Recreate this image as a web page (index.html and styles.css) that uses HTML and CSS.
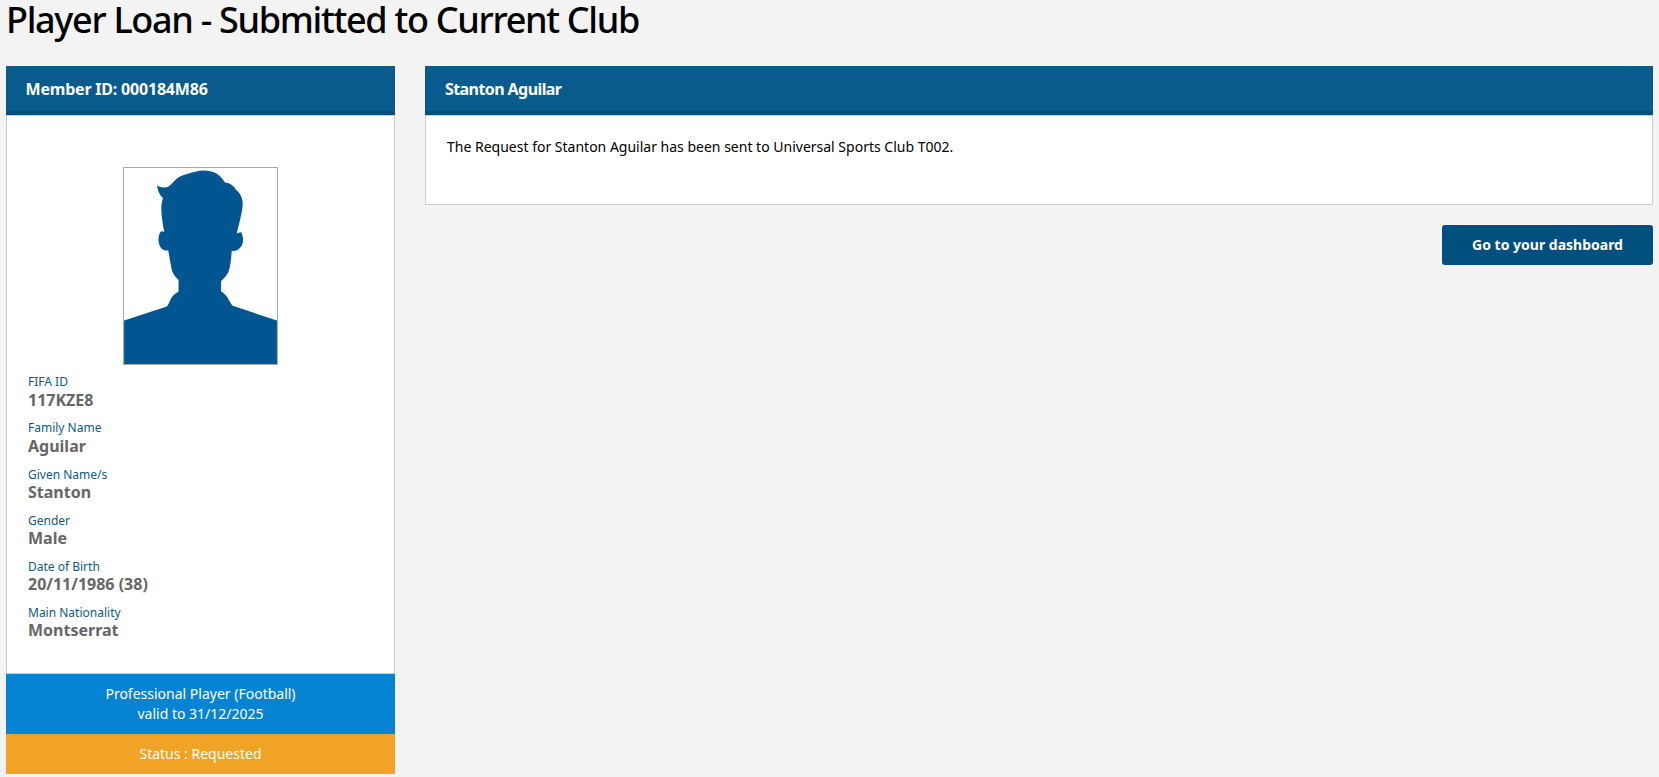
FILE: index.html
```html
<!DOCTYPE html>
<html lang="en">

<head>
    <meta charset="UTF-8">
    <meta name="viewport" content="width=device-width, initial-scale=1.0">
    <title>Player Loan - Submitted to Current Club</title>
    <link rel="stylesheet" href="styles.css">
</head>

<body>
    <h1>Player Loan - Submitted to Current Club</h1>

    <div class="columns">
        <!-- Member card -->
        <aside class="member-card">
            <div class="panel-title member-id">Member ID: 000184M86</div>
            <div class="member-body">
                <div class="photo">
                    <svg viewBox="41 38 460 590" aria-hidden="true">
                        <path d="M41 497 L170 455 C176 447 180 432 187 424 C192 418 200 414 205 410 L205 375 C195 366 186 355 184 342 C180 322 177 304 174 286 C160 289 150 280 146 266 C143 253 145 238 151 230 C155 227 159 228 162 231 C157 205 153 180 153 160 C153 148 155 138 158 128 C150 122 143 110 140 90 C148 96 160 99 172 95 C182 91 192 73 208 64 C220 58 240 53 255 49 C275 43 300 44 318 54 C330 61 338 72 345 82 C360 84 372 92 378 104 C390 112 398 128 398 145 C398 165 390 195 380 236 C385 233 391 230 394 232 C400 245 401 258 396 270 C390 282 378 290 365 287 C364 305 362 325 358 342 C354 358 344 368 333 378 L333 410 C342 414 350 424 355 433 C360 441 364 449 368 453 L501 497 L501 628 L41 628 Z"/>
                    </svg>
                </div>
                <dl class="details">
                    <div class="detail"><dt>FIFA ID</dt><dd>117KZE8</dd></div>
                    <div class="detail"><dt>Family Name</dt><dd>Aguilar</dd></div>
                    <div class="detail"><dt>Given Name/s</dt><dd>Stanton</dd></div>
                    <div class="detail"><dt>Gender</dt><dd>Male</dd></div>
                    <div class="detail"><dt>Date of Birth</dt><dd>20/11/1986 (38)</dd></div>
                    <div class="detail"><dt>Main Nationality</dt><dd>Montserrat</dd></div>
                </dl>
            </div>
            <div class="licence">Professional Player (Football)<br>valid to 31/12/2025</div>
            <div class="status">Status : Requested</div>
        </aside>

        <!-- Request message -->
        <section class="request">
            <div class="panel-title player-name">Stanton Aguilar</div>
            <div class="request-body">
                <p>The Request for Stanton Aguilar has been sent to Universal Sports Club T002.</p>
            </div>
            <div class="actions">
                <button type="button" class="dashboard-button">Go to your dashboard</button>
            </div>
        </section>
    </div>
</body>

</html>
```

FILE: styles.css
```css
/* Global styles */
* {
    padding: 0;
    margin: 0;
    box-sizing: border-box;
}

body {
    font-family: "Noto Sans", "Open Sans", Arial, sans-serif;
    background-color: #f3f3f3;
    padding: 0 6px 0 6px;
    color: #000;
}

h1 {
    font-size: 36px;
    font-weight: 500;
    line-height: 40px;
    height: 66px;
    letter-spacing: -1.3px;
}

.columns {
    display: grid;
    grid-template-columns: 389px 1fr;
    gap: 30px;
    align-items: start;
}

/* Blue title bars */
.panel-title {
    height: 49px;
    background-color: #095b8d;
    border-bottom: 4px solid #00507f;
    color: #fff;
    font-size: 16px;
    font-weight: 700;
    line-height: 47px;
    padding-left: 20px;
}

.member-id {
    letter-spacing: -0.2px;
    padding-left: 19.5px;
}

.player-name {
    letter-spacing: -0.58px;
}

/* Member card */
.member-body {
    height: 559px;
    background-color: #fff;
    border: 1px solid #ccc;
    padding-top: 51px;
}

.photo {
    width: 155px;
    height: 198px;
    margin: 0 auto 9px;
    border: 1px solid #aaa;
}

.photo svg {
    display: block;
    width: 100%;
    height: 100%;
    fill: #015591;
}

.details {
    padding: 0.36px 0 0 21px;
}

.detail {
    height: 46.09px;
}

.detail dt {
    font-size: 12px;
    line-height: 16px;
    color: #0a5a8c;
}

.detail dd {
    font-size: 16px;
    font-weight: 700;
    line-height: 21px;
    margin-top: -0.36px;
    color: #666;
}

.licence,
.status {
    color: #fff;
    font-size: 14px;
    text-align: center;
}

.licence {
    height: 60px;
    background-color: #0783d3;
    line-height: 20px;
    padding-top: 10px;
}

.status {
    height: 40px;
    line-height: 39px;
    background-color: #f1a325;
}

/* Request panel */
.request-body {
    height: 90px;
    background-color: #fff;
    border: 1px solid #ccc;
    padding: 21px 21px;
    font-size: 14px;
    line-height: 20px;
}

.actions {
    display: flex;
    justify-content: flex-end;
    margin-top: 20px;
}

.dashboard-button {
    width: 211px;
    height: 40px;
    padding-bottom: 2px;
    background-color: #00507f;
    color: #fff;
    border: none;
    border-radius: 3px;
    font-family: inherit;
    font-size: 14px;
    font-weight: 700;
    cursor: pointer;
}
```
